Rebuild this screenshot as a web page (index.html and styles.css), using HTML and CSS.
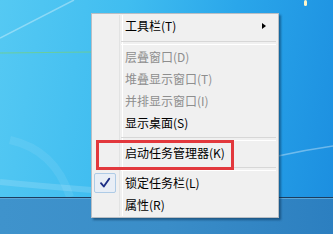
FILE: index.html
```html
<!DOCTYPE html>
<html lang="zh-CN">
<head>
<meta charset="utf-8">
<title>任务栏菜单</title>
<link rel="stylesheet" href="styles.css">
</head>
<body>
<div class="screen">
  <div class="desktop">
    <svg class="wallpaper" width="333" height="197" viewBox="0 0 333 197" aria-hidden="true">
      <line x1="0" y1="38" x2="74" y2="0" stroke="#ffffff" stroke-opacity="0.35" stroke-width="1.5"/>
      <line x1="0" y1="53" x2="92" y2="52" stroke="#6fd08a" stroke-opacity="0.8" stroke-width="1.2"/>
      <path d="M278 156 Q305 150 333 146" stroke="#ffffff" stroke-opacity="0.35" stroke-width="1.5" fill="none"/>
      <path d="M0 182 Q40 186 92 190" stroke="#ffffff" stroke-opacity="0.15" stroke-width="6" fill="none"/>
      <path d="M10 140 Q55 150 70 197" stroke="#ffffff" stroke-opacity="0.08" stroke-width="8" fill="none"/>
      <rect x="304" y="0" width="3" height="6" rx="1.5" fill="#fff6c8"/>
    </svg>
  </div>
  <div class="taskbar"></div>

  <div class="menu">
    <div class="item">
      <span class="label">工具栏(T)</span>
      <span class="arrow"></span>
    </div>
    <div class="sep sep-first"></div>
    <div class="item disabled"><span class="label">层叠窗口(D)</span></div>
    <div class="item disabled"><span class="label">堆叠显示窗口(T)</span></div>
    <div class="item disabled"><span class="label">并排显示窗口(I)</span></div>
    <div class="item"><span class="label">显示桌面(S)</span></div>
    <div class="sep"></div>
    <div class="item"><span class="label">启动任务管理器(K)</span></div>
    <div class="sep"></div>
    <div class="item">
      <span class="check">
        <svg width="12" height="12" viewBox="0 0 12 12" aria-hidden="true">
          <path d="M2 6.2 L4.8 9.5 L10.2 1.8" stroke="#1d2f86" stroke-width="1.9" fill="none" stroke-linecap="round" stroke-linejoin="round"/>
        </svg>
      </span>
      <span class="label">锁定任务栏(L)</span>
    </div>
    <div class="item"><span class="label">属性(R)</span></div>

    <div class="highlight"></div>
  </div>
</div>
</body>
</html>
```

FILE: styles.css
```css
* {
  box-sizing: border-box;
}

html, body {
  margin: 0;
  padding: 0;
}

body {
  width: 333px;
  height: 234px;
  overflow: hidden;
  font-family: "Noto Sans CJK SC", "Microsoft YaHei", sans-serif;
}

.screen {
  position: relative;
  width: 333px;
  height: 234px;
  display: flex;
  flex-direction: column;
}

.desktop {
  position: relative;
  height: 197px;
  background: linear-gradient(100deg, #55c9f3 0%, #40bdf0 35%, #2aa6ea 65%, #1c8fe0 100%);
}

.wallpaper {
  position: absolute;
  left: 0;
  top: 0;
}

.taskbar {
  flex: 1;
  border-top: 1px solid #1d3d5e;
  background: linear-gradient(90deg, #3f93cc 0%, #3a8dc8 50%, #2c7fc0 100%);
  box-shadow: inset 0 1px 0 #5aa6d8;
}

.menu {
  position: absolute;
  left: 91px;
  top: 13px;
  width: 188px;
  height: 205px;
  padding: 1px 2px;
  background: #f0f0f0;
  border: 1px solid #b9bec4;
  box-shadow: 2px 2px 2px rgba(0, 30, 60, 0.45);
  display: flex;
  flex-direction: column;
}

/* left gutter line */
.menu::before {
  content: "";
  position: absolute;
  left: 27px;
  top: 1px;
  bottom: 1px;
  width: 2px;
  border-left: 1px solid #e2e3e3;
  border-right: 1px solid #ffffff;
}

.item {
  position: relative;
  height: 22px;
  flex: none;
  display: flex;
  align-items: center;
  padding-left: 31px;
  padding-right: 10px;
  font-size: 12px;
  color: #000000;
  line-height: 1;
}

.item.disabled {
  color: #8e8e8e;
}

.label {
  flex: 1;
  white-space: nowrap;
}

.arrow {
  width: 0;
  height: 0;
  border-top: 3.5px solid transparent;
  border-bottom: 3.5px solid transparent;
  border-left: 4px solid #000000;
  margin-right: 0;
}

.sep {
  position: relative;
  height: 8px;
  flex: none;
}

.sep::after {
  content: "";
  position: absolute;
  left: 27px;
  right: 0;
  top: 3px;
  height: 2px;
  border-top: 1px solid #d7d7d7;
  border-bottom: 1px solid #ffffff;
}

.sep-first {
  height: 9px;
}

.sep-first::after {
  top: 4px;
}

.check {
  position: absolute;
  left: 0;
  top: 1px;
  width: 22px;
  height: 20px;
  border: 1px solid #aecbe6;
  border-radius: 2px;
  background: #e8eef6;
  display: flex;
  align-items: center;
  justify-content: center;
}

.highlight {
  position: absolute;
  left: 4px;
  top: 126px;
  width: 138px;
  height: 30px;
  border: 3px solid #e2383d;
  pointer-events: none;
}
```
